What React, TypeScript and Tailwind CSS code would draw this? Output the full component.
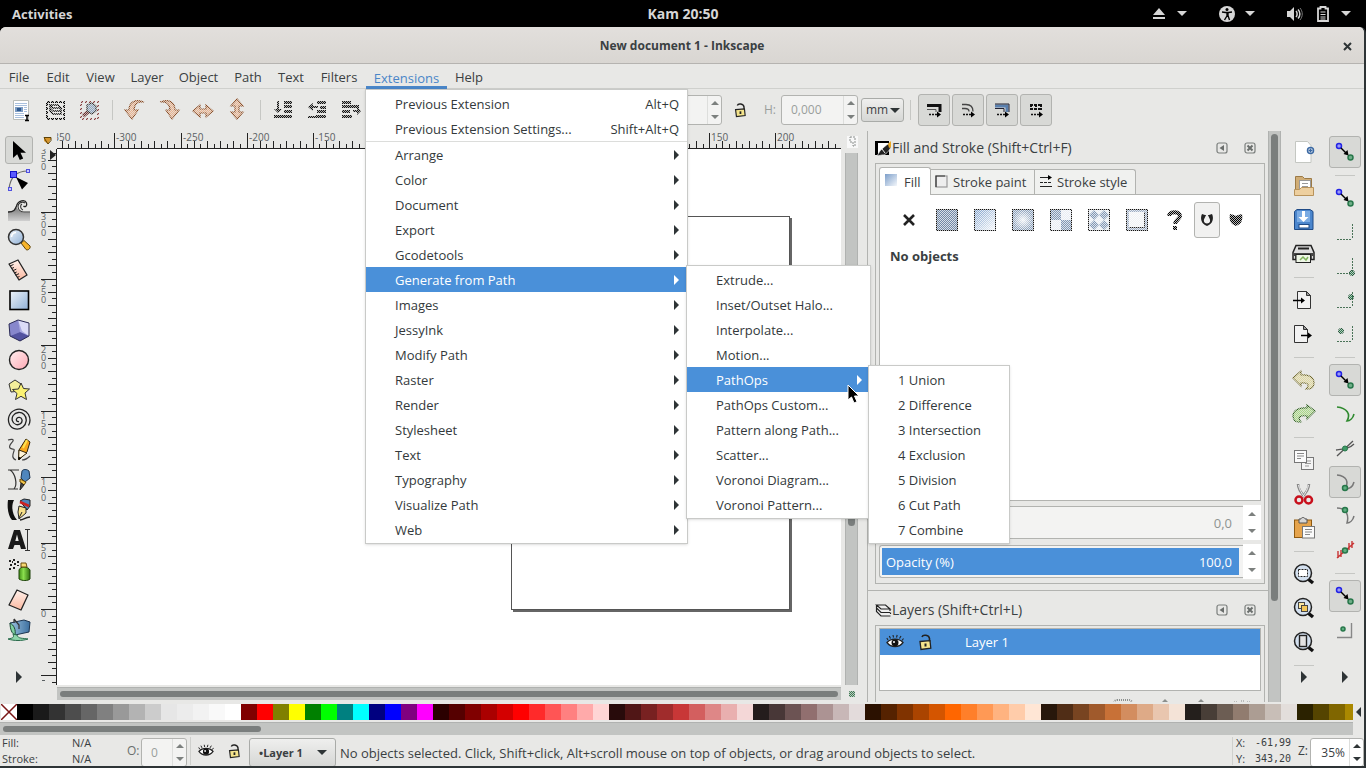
import React from "react";

type Kids = { children?: React.ReactNode };

const Svg = ({ s = 24, children }: Kids & { s?: number }) => (
  <svg width={s} height={s} viewBox={`0 0 ${s} ${s}`} fill="none" className="block shrink-0" aria-hidden="true">
    {children}
  </svg>
);

/* Shared gradients, plus the checkerboard mask used for insensitive icons */
const Defs = () => (
  <svg width="0" height="0" className="absolute" aria-hidden="true">
    <defs>
      <pattern id="checker" width="2" height="2" patternUnits="userSpaceOnUse">
        <rect width="2" height="2" fill="#444" />
        <rect width="1" height="1" fill="#fff" />
        <rect x="1" y="1" width="1" height="1" fill="#fff" />
      </pattern>
      <mask id="dither" maskUnits="userSpaceOnUse" x="0" y="0" width="32" height="32">
        <rect width="32" height="32" fill="url(#checker)" />
      </mask>
      <linearGradient id="gBlue" x1="0" y1="0" x2="1" y2="1">
        <stop offset="0" stopColor="#eef4fa" />
        <stop offset="1" stopColor="#8fb0d6" />
      </linearGradient>
      <linearGradient id="gFill" x1="0" y1="0" x2="1" y2="1">
        <stop offset="0" stopColor="#7d9fca" />
        <stop offset="1" stopColor="#f4f7fb" />
      </linearGradient>
      <linearGradient id="gPink" x1="0" y1="0" x2="1" y2="1">
        <stop offset="0" stopColor="#fff0f0" />
        <stop offset="1" stopColor="#ffa8b4" />
      </linearGradient>
      <linearGradient id="gSkin" x1="0" y1="0" x2="0" y2="1">
        <stop offset="0" stopColor="#fff2ec" />
        <stop offset="1" stopColor="#fbb8a0" />
      </linearGradient>
      <linearGradient id="gWave" x1="0" y1="0" x2="0" y2="1">
        <stop offset="0" stopColor="#777" />
        <stop offset="1" stopColor="#d0d0d0" />
      </linearGradient>
      <linearGradient id="gPot" x1="0" y1="0" x2="1" y2="0">
        <stop offset="0" stopColor="#9cc3e0" />
        <stop offset="1" stopColor="#3c6f9f" />
      </linearGradient>
      <linearGradient id="gGreen" x1="0" y1="0" x2="1" y2="0">
        <stop offset="0" stopColor="#3f8f14" />
        <stop offset="0.4" stopColor="#8be04e" />
        <stop offset="1" stopColor="#2f6d0f" />
      </linearGradient>
      <radialGradient id="gRadial">
        <stop offset="0" stopColor="#f2f5f9" />
        <stop offset="1" stopColor="#8ba0bb" />
      </radialGradient>
    </defs>
  </svg>
);

/* ---------- toolbox icons ---------- */
const SelectTool = () => (
  <Svg><path d="M6 3v17l4.200-3.800 2.600 5.800 3.400-1.600-2.700-5.600h5.500z" fill="#000" /></Svg>
);
const NodeTool = () => (
  <Svg>
    <path d="M2 21C3 11 8 3 21 3" stroke="#6a6a6a" strokeWidth="1.200" />
    <rect x="3.500" y="3.500" width="6" height="6" fill="#5a5aff" stroke="#1414c8" />
    <rect x="19.500" y="1.500" width="3" height="3" fill="#c8c8ff" stroke="#5050e0" />
    <rect x="1.500" y="19.500" width="3" height="3" fill="#c8c8ff" stroke="#5050e0" />
    <path d="M9 9l12 6-6 6.500z" fill="#000" />
  </Svg>
);
const TweakTool = () => (
  <Svg>
    <path d="M1 14c5 0 6-2 8-5 3 4 4 5 7 5.500h7V23H1z" fill="url(#gWave)" />
    <path d="M1 14c6 0 7-2 8.500-6C11 2.500 18 1 19.500 5c1 3-1.500 4.500-3 3" stroke="#222" strokeWidth="1.300" />
    <path d="M18 5c-3-2-7 0-7 3.500 0 3.500 3 5.500 6 5.500h6M15 6c-2 1-2 5 1 6" stroke="#333" strokeWidth="1.100" />
  </Svg>
);
const ZoomTool = () => (
  <Svg>
    <path d="M14 15l3-2.500 6 5.500c1 2-2 5-4 3.500z" fill="#f7b42a" stroke="#5e4206" />
    <circle cx="9" cy="9" r="7.500" fill="url(#gBlue)" stroke="#333" strokeWidth="1.500" />
    <path d="M4.500 9A5 5 0 0 1 9 4.500" stroke="#fff" strokeWidth="1.500" />
  </Svg>
);
const MeasureTool = () => (
  <Svg>
    <path d="M2 6l9-4 9 15-8 5z" fill="url(#gSkin)" stroke="#222" strokeWidth="1.300" strokeLinejoin="round" />
    <path d="M3 8l3.500-1.500M4.500 10.500l2.500-1M5.800 12.700l3.500-1.500M7.200 15l2.500-1M8.500 17.200l3.500-1.500M10 19.500l2.500-1" stroke="#222" />
  </Svg>
);
const RectTool = () => (
  <Svg><rect x="3" y="3" width="18.500" height="18.500" fill="url(#gBlue)" stroke="#000" strokeWidth="1.600" /></Svg>
);
const BoxTool = () => (
  <Svg>
    <path d="M2 6l9-4 11 3v13l-9 5-10-5z" fill="#a9a9e0" />
    <path d="M11 2l11 3v13l-7-5z" fill="#dcdcf7" />
    <path d="M2 6l9-4 2 12-10 4z" fill="#8787cc" />
    <path d="M3 18l10-4 9 4-9 5z" fill="#5353a0" />
    <path d="M2 6l9-4 11 3v13l-9 5-10-5z" stroke="#2c2c55" strokeLinejoin="round" />
  </Svg>
);
const CircleTool = () => (
  <Svg><circle cx="12" cy="12" r="9.500" fill="url(#gPink)" stroke="#222" strokeWidth="1.400" /></Svg>
);
const StarTool = () => (
  <Svg>
    <path d="M2 6l6-4 6 4-1 7-9 1z" fill="#f4ee9b" stroke="#333" strokeLinejoin="round" />
    <path d="M14 5l2.500 5.500 6 .5-4.500 4 1.500 6.500-5.500-3.200-5.500 3.200 1.500-6-4.500-4 6-.5z" fill="#fbf272" stroke="#333" strokeLinejoin="round" />
  </Svg>
);
const SpiralTool = () => (
  <Svg>
    <path d="M12 13.500c-2 .5-3-1-2.500-2.500 1-2.500 5-2 5.500.8.600 3.500-3 5.700-6 4.700-4-1.300-4.800-6-2.800-9C8.800 3.800 14 3.500 17 6.500c3.500 3.500 2.700 9.500-1 12.500-4.500 3.500-11 2.500-13.500-2.500C0 11 2 4.500 8 2c5-2 11 0 13.500 4.500 2 4 1.500 8.500 0 11" stroke="#222" strokeWidth="1.300" />
  </Svg>
);
const PencilTool = () => (
  <Svg>
    <path d="M1 2c3-1 6-1 5 1S1 8 3 10s5 0 4 3-3 7 2 9M15 22c4 0 6-2 8-4" stroke="#444" strokeWidth="1.200" />
    <path d="M12 12l7-11 4 3-3 10-8 8z" fill="#f9a61c" stroke="#33260a" />
    <path d="M12 12l-.5 9.500L20 15z" fill="#fff3d6" stroke="#33260a" />
    <path d="M16 10l4-8" stroke="#ffe34d" strokeWidth="2" />
    <path d="M11.300 22l.3-3.500 2.600 1.500z" fill="#000" />
  </Svg>
);
const PenTool = () => (
  <Svg>
    <path d="M1 2h11M3 2c5 3 8 14 4 19M1 21h10" stroke="#333" strokeWidth="1.200" />
    <path d="M15 3c1-2 5-2 7 0l1 7-5 4-4-4z" fill="#4f86bd" stroke="#1d3550" />
    <path d="M13 11l6 3-2 3-4-3z" fill="#f0c44a" stroke="#5e4206" />
    <path d="M14 15l-1 7 4-5z" fill="#444" stroke="#222" />
  </Svg>
);
const CalligraphyTool = () => (
  <Svg>
    <path d="M1 2h6C4 8 5 16 10 22H5C1 18 0 9 1 2z" fill="#111" />
    <path d="M13 3l4-2 6 1v6l-3 4z" fill="#4f86bd" stroke="#222" />
    <path d="M13 4l9 4" stroke="#c22" strokeWidth="2.500" />
    <path d="M12 8l7 2v5l-7 6-1-7z" fill="#f7e08a" stroke="#222" />
    <path d="M12 20l3-6" stroke="#222" />
    <path d="M13 22c4 0 5-3 10-3" stroke="#222" strokeWidth="1.500" />
  </Svg>
);
const TextTool = () => (
  <Svg>
    <path fillRule="evenodd" d="M7 2h6l6 19h-5l-1.200-4H7.500L6 21H1zM10 6.500l-1.700 6.500h3.400z" fill="#1a1a1a" />
    <path d="M18 1.500h5M20.500 1.500v21M18 22.500h5" stroke="#333" />
  </Svg>
);
const SprayTool = () => (
  <Svg>
    <path d="M12 12c1-4 9-4 11 0v9c-2 2-8 2-11 0z" fill="url(#gGreen)" stroke="#1e420a" />
    <path d="M14 9V5h5l1 4z" fill="#f6d873" stroke="#6b4d0c" />
    <path d="M2 2h2v2H2zM6 1h2v2H6zM3 6h2v2H3zM7 5h2v2H7zM2 10h2v2H2zM6 9h2v2H6zM10 3h2v2h-2zM10 7h2v1h-2zM5 3h1v2H5z" fill="#222" />
  </Svg>
);
const EraserTool = () => (
  <Svg><path d="M10 2l11 5-7 15L2 17z" fill="url(#gSkin)" stroke="#222" strokeWidth="1.300" strokeLinejoin="round" /></Svg>
);
const BucketTool = () => (
  <Svg>
    <path d="M3 5l14-3 6 2-1 10-14 3z" fill="url(#gPot)" stroke="#1d3550" strokeLinejoin="round" />
    <path d="M3 5c4 2 6 7 5 12-3-1-5-6-5-12z" fill="#7fd0a0" stroke="#1d4a35" />
    <path d="M6 16c1 3 1 4-5 5 6 2 14 2 20 0-5-1-10 0-11-4z" fill="#8fd6aa" stroke="#2a6b4c" />
    <path d="M7 5V1M7 1l5 6v4" stroke="#333" strokeWidth="1.200" />
  </Svg>
);

const TOOLS: [string, () => React.ReactElement][] = [
  ["Select", SelectTool], ["Edit nodes", NodeTool], ["Tweak", TweakTool], ["Zoom", ZoomTool],
  ["Measure", MeasureTool], ["Rectangle", RectTool], ["3D box", BoxTool], ["Ellipse", CircleTool],
  ["Star", StarTool], ["Spiral", SpiralTool], ["Pencil", PencilTool], ["Pen", PenTool],
  ["Calligraphy", CalligraphyTool], ["Text", TextTool], ["Spray", SprayTool], ["Eraser", EraserTool],
  ["Paint bucket", BucketTool],
];

/* ---------- top toolbar icons ---------- */
const PageIcon = () => (
  <Svg>
    <path d="M4.500 2.500h15v19h-15z" fill="#fff" stroke="#b9bdb9" />
    <path d="M6 5.500h12M6 7.500h12M6 15.500h9M6 17.500h9M6 19.500h9" stroke="#a9c1de" />
    <rect x="6" y="9" width="8" height="5" fill="#7d9cc2" /><rect x="8" y="10" width="4" height="3" fill="#2f5a8f" />
    <path d="M15 9.500h3M15 11.500h3M15 13.500h3" stroke="#a9c1de" />
    <path d="M16 17.500h4M18 17.500v5M16 22.500h4" stroke="#000" strokeWidth="1.500" />
  </Svg>
);
const SelectLayers = () => (
  <Svg><g mask="url(#dither)">
    <rect x="4" y="4" width="17" height="17" stroke="#000" strokeWidth="2" strokeDasharray="3 1" />
    <path d="M7 8l3-2h7l2 4v8h-8l-3-3z" fill="#eee" />
    <path d="M7 7h8l3 3h-8zM7 7v3l3 3h8M7 10v3l3 3h8v-6" stroke="#000" strokeWidth="1.400" />
  </g></Svg>
);
const Deselect = () => (
  <Svg><g mask="url(#dither)">
    <rect x="4" y="4" width="17" height="17" stroke="#8a4040" strokeWidth="2" strokeDasharray="2 2" />
    <path d="M6 18l6-5" stroke="#6b3030" strokeWidth="4" />
    <path d="M10 7l5-2 4 3v5l-4 3-5-3z" fill="#8fa6c0" stroke="#333" strokeWidth="1.300" />
  </g></Svg>
);
const RotL = () => (
  <Svg><g mask="url(#dither)"><path d="M21 4C15 3 11 6 11 12h4l-6 9-7-9h4C6 5 12 0 21 4z" fill="#e8b391" stroke="#8a4a22" strokeWidth="1.200" /></g></Svg>
);
const RotR = () => (
  <Svg><g mask="url(#dither)"><path d="M3 4C9 3 13 6 13 12H9l6 9 7-9h-4C18 5 12 0 3 4z" fill="#e8b391" stroke="#8a4a22" strokeWidth="1.200" /></g></Svg>
);
const FlipH = () => (
  <Svg><g mask="url(#dither)"><path d="M2 13l7-6v4h6V7l7 6-7 6v-4H9v4z" fill="#e8b391" stroke="#8a4a22" strokeWidth="1.200" /></g></Svg>
);
const FlipV = () => (
  <Svg><g mask="url(#dither)"><path d="M12 1l6 7h-4v6h4l-6 7-6-7h4V8H6z" fill="#e8b391" stroke="#8a4a22" strokeWidth="1.200" /></g></Svg>
);
const LowerBottom = () => (
  <Svg><g mask="url(#dither)" fill="#111">
    <path d="M3 17h18v3H3zM13 3h8v3h-8zM13 7h8v3h-8zM13 12h8v3h-8z" /><path d="M6 3h2v8h3l-4 4-4-4h3z" />
  </g></Svg>
);
const LowerOne = () => (
  <Svg><g mask="url(#dither)" fill="#111">
    <path d="M11 17h10v3H3v-2h8zM12 3h9v3h-9zM15 8h6v3h-6zM12 12h9v3h-9z" /><path d="M3 9l5-4v3h5v2H8v3z" />
  </g></Svg>
);
const RaiseOne = () => (
  <Svg><g mask="url(#dither)" fill="#111">
    <path d="M3 3h9v3H3zM3 7h17v3H3zM3 12h8v3H3zM3 17h10v3H3z" /><path d="M22 13l-4-4v3h-4v2h4v3z" />
  </g></Svg>
);
const OpenLock = ({ s = 18 }: { s?: number }) => (
  <svg width={s} height={s} viewBox="0 0 18 18" fill="none" className="block shrink-0" aria-hidden="true">
    <path d="M6 4c1-3 7-2 7.500 1.500V9" stroke="#222" strokeWidth="1.600" />
    <path d="M4 8.500l10-.8.8 7.500L5 16.500z" fill="#f4e48c" stroke="#222" strokeWidth="1.300" />
    <path d="M9.500 10.500v3" stroke="#222" strokeWidth="2" />
  </svg>
);
const EyeIcon = ({ s = 18 }: { s?: number }) => (
  <svg width={s} height={s} viewBox="0 0 18 18" fill="none" className="block shrink-0" aria-hidden="true">
    <path d="M1 9.500C5 5 13 5 17 9.500 13 15 5 15 1 9.500z" fill="#fff" stroke="#222" strokeWidth="1.300" />
    <circle cx="9" cy="9.800" r="3.500" fill="#111" /><circle cx="8" cy="9" r="1" fill="#fff" />
    <path d="M2 7L.8 5M4.500 5.500L3.300 3M7.500 4.500L7 2M10.500 4.500l.7-2.500M13.500 5.500L15 3M16 7.500l1.500-2" stroke="#222" strokeWidth="1.100" />
  </svg>
);
const ScaleStroke = ({ kind }: { kind: number }) => (
  <Svg>
    {kind === 0 && <><path d="M5 7.500h13V14" stroke="#111" strokeWidth="3" /><path d="M5 11.500h9V14" stroke="#555" /></>}
    {kind === 1 && <path d="M6 6.500h4c5 0 7 2 7 7M6 10.500h3c3 0 4 1 4 3" stroke="#444" strokeWidth="1.300" />}
    {kind === 2 && <><path d="M5 8h12v6" stroke="#5a80ae" strokeWidth="3" /><path d="M5 6h14v8M5 10.500h9V14" stroke="#223" /></>}
    {kind === 3 && <path d="M6 7h12M6 11h12M7 6v6M12 6v6M17 6v6" stroke="#111" strokeWidth="2" strokeDasharray="3 1" />}
    <path d="M7 16.500h8" stroke="#111" strokeDasharray="2 1" strokeWidth="1.500" />
    <path d="M15 13.500l4 3-4 3z" fill="#000" />
  </Svg>
);

/* ---------- command bar icons ---------- */
const sheet = "M5.500 3.500h9l4 4v13h-13z";
const NewDoc = () => (
  <Svg>
    <path d="M3.500 1.500h12l3.500 4v17H3.500z" fill="#fff" stroke="#c4c7c2" />
    <circle cx="18.500" cy="10.500" r="3" fill="#fff" stroke="#3b69a3" strokeWidth="1.500" />
    <path d="M16.500 10.500h4M18.500 8.500v4" stroke="#3b69a3" strokeWidth="1.500" />
  </Svg>
);
const OpenDoc = () => (
  <Svg>
    <path d="M3.500 2.500h7l2 2h7v14h-16z" fill="#d0ad76" stroke="#9c7a46" />
    <rect x="7.500" y="6.500" width="11" height="9" fill="#fff" stroke="#999" />
    <path d="M10 9.500h6M10 12.500h6" stroke="#999" />
    <path d="M2.500 15.500h5l2-2h12v8h-19z" fill="#edcf9f" stroke="#b8935b" />
  </Svg>
);
const SaveDoc = () => (
  <Svg>
    <path d="M5 1.500h13l3 2v18H2.500v-18z" fill="#4b86cd" stroke="#1e4a86" />
    <rect x="5" y="3" width="13" height="11" fill="#7aabe3" />
    <path d="M10 3h3v6h3.500L11.500 14 6.500 9H10z" fill="#fff" />
    <rect x="7" y="16.500" width="10" height="3.500" fill="#fff" stroke="#1e4a86" />
  </Svg>
);
const PrintDoc = () => (
  <Svg>
    <path d="M4 3.500h15l3 7v7h-3v-4h-15v4h-3v-7z" fill="#ddd" stroke="#222" strokeWidth="1.500" />
    <path d="M6 6.500h11" stroke="#222" strokeWidth="2" />
    <path d="M1.500 11h20v3h-20z" fill="#444" />
    <rect x="4" y="12.500" width="14.500" height="8" fill="#eef6e6" stroke="#222" />
    <path d="M8 18l3-3 3 3 2-3" stroke="#7fb35c" strokeWidth="1.500" />
  </Svg>
);
const ImportDoc = () => (
  <Svg><path d={sheet} fill="#f2f2f2" stroke="#333" /><path d="M14.500 3.500v4h4z" fill="#999" stroke="#333" />
    <path d="M1 12.500h9" stroke="#000" strokeWidth="1.500" /><path d="M9 9.500l4 3-4 3z" fill="#000" /></Svg>
);
const ExportDoc = () => (
  <Svg><path d="M2.500 3.500h9l4 4v13h-13z" fill="#f2f2f2" stroke="#333" /><path d="M11.500 3.500v4h4z" fill="#999" stroke="#333" />
    <path d="M9 13.500h8" stroke="#000" strokeWidth="1.500" /><path d="M16 10.500l4 3-4 3z" fill="#000" /></Svg>
);
const UndoIcon = () => (
  <Svg><g mask="url(#dither)"><path d="M1 10l8-7v4c9-1 13 3 13 8 0 3-2 6-5 6h-3c4-4 2-7-5-6v3z" fill="#e0d8a0" stroke="#6f6726" strokeWidth="1.200" /></g></Svg>
);
const RedoIcon = () => (
  <Svg><g mask="url(#dither)"><path d="M23 9l-8-6v3C6 5 1 9 1 14c0 3 2 6 5 6h3c-4-5-1-7 6-6v3z" fill="#aad888" stroke="#2d5f1e" strokeWidth="1.200" /></g></Svg>
);
const CopyIcon = () => (
  <Svg>
    <rect x="9.500" y="9.500" width="12" height="12" fill="#f4f4f4" stroke="#777" />
    <path d="M13 13h6M13 15.500h6M13 18h4" stroke="#999" />
    <rect x="2.500" y="2.500" width="12" height="12" fill="#fbfbfb" stroke="#777" />
    <path d="M5 5.500h7M5 8h7M5 10.500h4" stroke="#888" />
  </Svg>
);
const CutIcon = () => (
  <Svg>
    <path d="M6 2c0 5 3 9 7 13M17 2c0 5-3 9-7 13" stroke="#888" strokeWidth="2.500" />
    <path d="M6.500 3c1 5 3 8 6 12M16.500 3c-1 5-3 8-6 12" stroke="#eee" />
    <circle cx="7" cy="18" r="3.500" stroke="#c8101c" strokeWidth="2.500" />
    <circle cx="16.500" cy="18" r="3.500" stroke="#c8101c" strokeWidth="2.500" />
  </Svg>
);
const PasteIcon = () => (
  <Svg>
    <rect x="2.500" y="4" width="17" height="17.500" fill="#e6a44c" stroke="#8f5a10" />
    <path d="M7 3h2c0-2 4-2 4 0h2v4H7z" fill="#d6d6d6" stroke="#555" />
    <rect x="10.500" y="10.500" width="12" height="11.500" fill="#fbfbfb" stroke="#777" />
    <path d="M13 13.500h7M13 16h7M13 18.500h5" stroke="#888" />
  </Svg>
);
const Lens = ({ children }: Kids) => (
  <Svg>
    <path d="M16 17l5 4" stroke="#111" strokeWidth="3.500" />
    <circle cx="11" cy="11" r="8.500" fill="#d3e0ef" stroke="#222" strokeWidth="1.500" />
    {children}
  </Svg>
);
const ZoomSel = () => (
  <Lens><rect x="6.500" y="7.500" width="9" height="7" fill="#fff" stroke="#222" strokeDasharray="2 1" /></Lens>
);
const ZoomDraw = () => (
  <Lens><rect x="6.500" y="6.500" width="6" height="6" fill="#fbe7a0" stroke="#444" /><rect x="9.500" y="9.500" width="6" height="6" fill="#f3c75a" stroke="#444" /></Lens>
);
const ZoomPage = () => (
  <Lens><rect x="7.500" y="5.500" width="7" height="11" fill="#e3e3e3" stroke="#222" strokeWidth="1.400" /></Lens>
);

/* ---------- snap bar icons ---------- */
const SnapNodes = () => (
  <Svg>
    <circle cx="6" cy="6" r="2.500" fill="#9a9af5" stroke="#2323e6" strokeWidth="1.500" />
    <circle cx="17.500" cy="17.500" r="2.500" fill="#6fae88" stroke="#27774a" strokeWidth="1.500" />
    <path d="M8 8l5.500 5.500" stroke="#000" strokeWidth="1.400" /><path d="M15.500 15.500l-5-1.500 4-4z" fill="#000" />
  </Svg>
);
const SnapBox = ({ x, y }: { x?: number; y?: number }) => (
  <Svg>
    <path d="M4 19.500h15M19.500 4v15" stroke="#4a7358" strokeDasharray="2 1" />
    {x !== undefined && <g mask="url(#dither)"><circle cx={x} cy={y} r="2.500" fill="#2f7a50" stroke="#174a2e" /></g>}
  </Svg>
);
const SnapPath = () => (
  <Svg><path d="M4 5c10 1 14 7 10 14 3 0 6-3 7-7" stroke="#2f8a2f" strokeWidth="1.600" /></Svg>
);
const SnapCross = () => (
  <Svg><path d="M4 20L20 5M3 14c8-1 13-1 18-6" stroke="#555" strokeWidth="1.300" /><circle cx="12" cy="12.500" r="2.500" fill="#3f9a66" stroke="#27774a" /></Svg>
);
const SnapCusp = () => (
  <Svg><path d="M4 5c10 1 12 7 8 14 5 0 8-3 9-7" stroke="#777" strokeWidth="1.500" /><circle cx="12" cy="18" r="2.500" fill="#5fae80" stroke="#27774a" strokeWidth="1.500" /></Svg>
);
const SnapSmooth = () => (
  <Svg><path d="M4 4c10 0 12 8 10 15 3 0 6-3 7-7" stroke="#777" strokeWidth="1.500" /><circle cx="12" cy="6" r="2.500" fill="#5fae80" stroke="#27774a" strokeWidth="1.500" /></Svg>
);
const SnapMid = () => (
  <Svg><path d="M4 20L21 5M5 13v7M8 12v7M16 5v7M19 3v7" stroke="#c83434" strokeWidth="1.400" /><circle cx="12" cy="12.500" r="2.500" fill="#5fae80" stroke="#27774a" strokeWidth="1.500" /></Svg>
);
const SnapCorner = () => (
  <Svg><path d="M4 19.500h14.500V5" stroke="#888" strokeWidth="1.400" /><circle cx="10" cy="11" r="2" fill="#5fae80" stroke="#27774a" strokeWidth="1.500" /></Svg>
);

/* ---------- small parts ---------- */
const Tri = ({ dir = "right", w = 6, className = "" }: { dir?: "right" | "left" | "up" | "down"; w?: number; className?: string }) => {
  const h = w * 2;
  const d = {
    right: [w, h, `M0 0L${w} ${w}L0 ${h}z`],
    left: [w, h, `M${w} 0L0 ${w}L${w} ${h}z`],
    up: [h, w, `M0 ${w}L${w} 0L${h} ${w}z`],
    down: [h, w, `M0 0L${w} ${w}L${h} 0z`],
  }[dir] as [number, number, string];
  return (
    <svg width={d[0]} height={d[1]} viewBox={`0 0 ${d[0]} ${d[1]}`} className={`block shrink-0 ${className}`} aria-hidden="true">
      <path d={d[2]} fill="currentColor" />
    </svg>
  );
};

const Steps = ({ className }: { className: string }) => (
  <span className={`flex shrink-0 flex-col ${className}`}>
    <button aria-label="Increase" className="flex flex-1 items-center justify-center"><Tri dir="up" w={4} /></button>
    <button aria-label="Decrease" className="flex flex-1 items-center justify-center"><Tri dir="down" w={4} /></button>
  </span>
);

const HSep = () => (
  <div className="flex h-3 w-full items-center justify-center"><div className="h-px w-5 bg-[#c6c7c4]" /></div>
);
const VSep = () => (
  <div className="flex h-full w-3 items-center justify-center"><div className="h-5 w-px bg-[#c6c7c4]" /></div>
);

const ToolButton = ({ label, on, children }: Kids & { label: string; on?: boolean }) => (
  <button
    aria-label={label}
    aria-pressed={on}
    className={`my-px flex size-8 shrink-0 items-center justify-center rounded-[3px] border ${on ? "border-[#b2b3b0] bg-[#d8d9d6]" : "border-transparent"}`}
  >
    {children}
  </button>
);

/* ---------- menus ---------- */
const popup = "absolute z-20 border border-[#c9cac8] bg-white py-px shadow-sm";
const MenuRow = ({ label, keys, sub, on, children }: Kids & { label: string; keys?: string; sub?: boolean; on?: boolean }) => (
  <li className="relative" role="none">
    <button
      role="menuitem"
      className={`flex h-[25px] w-full items-center pr-2 pl-[29px] text-left whitespace-nowrap ${on ? "bg-[#4a90d9] text-white" : "text-[#33393b]"}`}
    >
      <span className="flex-1">{label}</span>
      {keys && <span>{keys}</span>}
      {sub && <Tri w={5} className={on ? "text-white" : "text-[#2e3436]"} />}
    </button>
    {children}
  </li>
);

const OPS = ["1 Union", "2 Difference", "3 Intersection", "4 Exclusion", "5 Division", "6 Cut Path", "7 Combine"];
const GENERATE = ["Extrude...", "Inset/Outset Halo...", "Interpolate...", "Motion...", "PathOps", "PathOps Custom...", "Pattern along Path...", "Scatter...", "Voronoi Diagram...", "Voronoi Pattern..."];
const EXTENSIONS = ["Arrange", "Color", "Document", "Export", "Gcodetools", "Generate from Path", "Images", "JessyInk", "Modify Path", "Raster", "Render", "Stylesheet", "Text", "Typography", "Visualize Path", "Web"];

const Pointer = () => (
  <svg width="14" height="20" viewBox="0 0 14 20" className="pointer-events-none absolute top-[17px] left-40 z-40" aria-hidden="true">
    <path d="M1 1v15l3.500-3 2.500 6 3-1.300-2.500-5.700H12z" fill="#000" stroke="#fff" />
  </svg>
);

const ExtensionsMenu = () => (
  <ul role="menu" className={`${popup} top-full left-0 -ml-px w-[323px]`}>
    <MenuRow label="Previous Extension" keys="Alt+Q" />
    <MenuRow label="Previous Extension Settings..." keys="Shift+Alt+Q" />
    <li role="separator" className="h-px bg-[#dcdddb]" />
    {EXTENSIONS.map((e) => (
      <MenuRow key={e} label={e} sub on={e === "Generate from Path"}>
        {e === "Generate from Path" && (
          <ul role="menu" className={`${popup} -top-0.5 left-full -ml-px w-[185px]`}>
            {GENERATE.map((g) => (
              <MenuRow key={g} label={g} sub={g === "PathOps"} on={g === "PathOps"}>
                {g === "PathOps" && (
                  <>
                    <ul role="menu" className={`${popup} -top-0.5 left-full -ml-0.5 w-[142px]`}>
                      {OPS.map((o) => <MenuRow key={o} label={o} />)}
                    </ul>
                    <Pointer />
                  </>
                )}
              </MenuRow>
            ))}
          </ul>
        )}
      </MenuRow>
    ))}
  </ul>
);

const MENUS: [string, string][] = [
  ["File", "w-[38px]"], ["Edit", "w-10"], ["View", "w-[45px]"], ["Layer", "w-12"], ["Object", "w-[55px]"],
  ["Path", "w-11"], ["Text", "w-[42px]"], ["Filters", "w-[54px]"], ["Extensions", "w-[81px]"], ["Help", "w-11"],
];

/* ---------- rulers ---------- */
const UNIT = 1.3217;
const H_LABELS = [-350, -300, -250, -200, -150, 150, 200];
const HRuler = () => {
  const marks = Array.from({ length: 320 }, (_, i) => (i - 72) * 5);
  return (
    <svg className="block h-[18px] w-full overflow-hidden text-[10px]" aria-hidden="true">
      {marks.map((m) => {
        const x = Math.round(454 + m * UNIT);
        const h = m % 50 === 0 ? 15 : m % 10 === 0 ? 7 : 4;
        return (
          <g key={m}>
            <rect x={x} y={17 - h} width="1" height={h} fill="#222" />
            {H_LABELS.includes(m) && <text x={x + 2} y="10" fill="#5a6063">{m}</text>}
          </g>
        );
      })}
      <rect y="17" width="100%" height="1" fill="#222" />
    </svg>
  );
};
const V_LABELS = [350, 300, 250, 200, 150, 100, 50, 0];
const VRuler = () => {
  const marks = Array.from({ length: 240 }, (_, i) => 355 - i * 5);
  return (
    <svg className="block h-full w-[18px] overflow-hidden text-[9px]" aria-hidden="true">
      {marks.map((m) => {
        const y = Math.round(460 - m * UNIT);
        const w = m % 50 === 0 ? 15 : m % 10 === 0 ? 8 : 4;
        return (
          <g key={m}>
            <rect x={17 - w} y={y} width={w} height="1" fill="#222" />
            {m === -50 && <rect x="3" y={y + 5} width="3" height="1" fill="#5a6063" />}
            {V_LABELS.includes(m) && String(m).split("").map((c, i) => (
              <text key={i} x="2" y={y + 8 + i * 8} fill="#5a6063">{c}</text>
            ))}
          </g>
        );
      })}
      <path d="M11 1l6 5-6 5z" fill="#222" />
      <rect x="17" width="1" height="100%" fill="#222" />
    </svg>
  );
};

/* ---------- palette ---------- */
const SWATCHES = [
  "bg-[#000000]", "bg-[#1a1a1a]", "bg-[#333333]", "bg-[#4d4d4d]", "bg-[#666666]", "bg-[#808080]", "bg-[#999999]", "bg-[#b3b3b3]", "bg-[#cccccc]", "bg-[#e6e6e6]", "bg-[#ececec]", "bg-[#f2f2f2]", "bg-[#f9f9f9]", "bg-[#ffffff]",
  "bg-[#800000]", "bg-[#ff0000]", "bg-[#808000]", "bg-[#ffff00]", "bg-[#008000]", "bg-[#00ff00]", "bg-[#008080]", "bg-[#00ffff]", "bg-[#000080]", "bg-[#0000ff]", "bg-[#800080]", "bg-[#ff00ff]",
  "bg-[#2b0000]", "bg-[#550000]", "bg-[#800000]", "bg-[#aa0000]", "bg-[#d40000]", "bg-[#ff0000]", "bg-[#ff2a2a]", "bg-[#ff5555]", "bg-[#ff8080]", "bg-[#ffaaaa]", "bg-[#ffd5d5]",
  "bg-[#280b0b]", "bg-[#501616]", "bg-[#782121]", "bg-[#a02c2c]", "bg-[#c83737]", "bg-[#d35f5f]", "bg-[#de8787]", "bg-[#e9afaf]", "bg-[#f4d7d7]",
  "bg-[#241c1c]", "bg-[#483737]", "bg-[#6c5353]", "bg-[#916f6f]", "bg-[#ac9393]", "bg-[#c8b7b7]", "bg-[#e3dbdb]",
  "bg-[#2b1100]", "bg-[#552200]", "bg-[#803300]", "bg-[#aa4400]", "bg-[#d45500]", "bg-[#ff6600]", "bg-[#ff7f2a]", "bg-[#ff9955]", "bg-[#ffb380]", "bg-[#ffccaa]", "bg-[#ffe6d5]",
  "bg-[#28170b]", "bg-[#502d16]", "bg-[#784421]", "bg-[#a05a2c]", "bg-[#c87137]", "bg-[#d38d5f]", "bg-[#deaa87]", "bg-[#e9c6af]", "bg-[#f4e3d7]",
  "bg-[#241f1c]", "bg-[#483e37]", "bg-[#6c5d53]", "bg-[#917c6f]", "bg-[#ac9d93]", "bg-[#c8beb7]", "bg-[#e3dedb]",
  "bg-[#2b2200]", "bg-[#554400]", "bg-[#806600]", "bg-[#aa8800]",
];

/* ---------- dock ---------- */
const DockButton = ({ close }: { close?: boolean }) => (
  <button aria-label={close ? "Close dialog" : "Iconify dialog"}>
    <svg width="12" height="12" viewBox="0 0 12 12" fill="none" className="block">
      <rect x="1" y="1" width="10" height="10" rx="2" stroke="#7a7e7c" strokeWidth="1.200" />
      {close ? <path d="M3.500 3.500l5 5M8.500 3.500l-5 5" stroke="#6a6e6c" strokeWidth="2" /> : <path d="M8 3v6L3.500 6z" fill="#6a6e6c" />}
    </svg>
  </button>
);
const DockTitle = ({ icon, children }: Kids & { icon: React.ReactNode }) => (
  <div className="flex h-[30px] shrink-0 items-center pr-3 pl-[7px]">
    {icon}
    <h2 className="flex-1 text-[14px]">{children}</h2>
    <div className="flex gap-4"><DockButton /><DockButton close /></div>
  </div>
);
const BrushIcon = () => (
  <Svg s={17}>
    <rect x="0" y="1" width="14" height="14" fill="#000" /><path d="M3 3h11L3 14z" fill="#fff" />
    <path d="M2 16c2-3 3-6 5-7 3-3 6-5 8-6l1 4c-2 4-5 8-9 8z" fill="#222" stroke="#eee" strokeWidth=".7" />
    <path d="M7 9l3 4" stroke="#eee" /><path d="M13 4l3-3v6l-2 1z" fill="#e8a723" />
  </Svg>
);
const LayersIcon = () => (
  <Svg s={17}>
    <path d="M1 3h10l5 4v8H6l-5-4z" fill="#eee" />
    <path d="M1.500 3h9l4.500 4H6zM1.500 3v3l4.500 4.500h9M1.500 6.500v3L6 14h9.500M15 7v2M15.500 10.500V12" stroke="#222" strokeWidth="1.200" />
  </Svg>
);
const PaintSwatch = ({ kind }: { kind: string }) => (
  <Svg s={22}>
    <g mask="url(#dither)">
      <rect width="22" height="22" fill="#111" />
      {kind === "flat" && <rect x="1" y="1" width="20" height="20" fill="#7288a6" />}
      {kind === "linear" && <rect x="1" y="1" width="20" height="20" fill="url(#gFill)" />}
      {kind === "radial" && <rect x="1" y="1" width="20" height="20" fill="url(#gRadial)" />}
      {kind === "pattern" && <><rect x="1" y="1" width="20" height="20" fill="#e8edf4" /><path d="M1 1h10v10H1zM11 11h10v10H11z" fill="#8197b5" /></>}
      {kind === "mesh" && <><rect x="1" y="1" width="20" height="20" fill="#e8edf4" /><path d="M6 1l5 5-5 5-5-5zM16 1l5 5-5 5-5-5zM6 11l5 5-5 5-5-5zM16 11l5 5-5 5-5-5z" fill="#8197b5" /></>}
      {kind === "swatch" && <><rect x="1" y="1" width="20" height="20" fill="#a0b0c6" /><rect x="3" y="3" width="15" height="15" fill="#f0f2f5" /><path d="M3 18.500h15.500V3" stroke="#222" /></>}
    </g>
  </Svg>
);

const FillAndStroke = () => (
  <section className="shrink-0 border-b border-[#b2b3b0] pb-1.5">
    <div className="pt-0.5"><DockTitle icon={<BrushIcon />}>Fill and Stroke (Shift+Ctrl+F)</DockTitle></div>
    <div className="mr-[3px] ml-[7px] border border-[#b2b3b0] px-[3px] pt-[3px] pb-1">
      <div role="tablist" className="flex items-end">
        <button role="tab" aria-selected="true" className="z-10 -mb-px flex h-7 w-[52px] items-center gap-1 rounded-t-[3px] border border-b-0 border-[#b2b3b0] bg-white pl-1">
          <Svg s={16}><rect x="1" y="0" width="12" height="12" fill="url(#gFill)" /></Svg>Fill
        </button>
        <button role="tab" aria-selected="false" className="flex h-[25px] w-[104px] items-center gap-1 border-t border-r border-[#b2b3b0] bg-[#f0f1ef] pl-1 whitespace-nowrap">
          <Svg s={14}><rect x="1" y="1" width="11" height="11" fill="#eee" stroke="#999" strokeWidth="1.200" /><path d="M1 12V1h9" stroke="#333" strokeWidth="1.200" /></Svg>Stroke paint
        </button>
        <button role="tab" aria-selected="false" className="flex h-[25px] w-[101px] items-center gap-1 rounded-tr-[3px] border-t border-r border-[#b2b3b0] bg-[#f0f1ef] pl-1 whitespace-nowrap">
          <Svg s={14}><path d="M1 7.500h12" stroke="#222" strokeDasharray="3 1" /><path d="M1 11.500h12M1 2.500h9" stroke="#222" /><path d="M9 0l4 2.500L9 5z" fill="#000" /></Svg>Stroke style
        </button>
      </div>
      <div role="tabpanel" className="h-[307px] border border-[#b2b3b0] bg-white">
        <div className="flex pt-[7px] pl-[10px]">
          <button aria-label="No paint" className="flex h-9 w-[38px] items-center justify-center">
            <Svg s={14}><path d="M2 2l10 10M12 2L2 12" stroke="#222" strokeWidth="2.600" /></Svg>
          </button>
          {["flat", "linear", "radial", "pattern", "mesh", "swatch"].map((k) => (
            <button key={k} aria-label={k} className="flex h-9 w-[38px] items-center justify-center"><PaintSwatch kind={k} /></button>
          ))}
          <button aria-label="Unknown paint" className="flex h-9 w-[38px] items-center justify-center">
            <Svg s={20}><g mask="url(#dither)"><path d="M4 6c0-5 11-5 11 0 0 3-5 4-5 8" stroke="#000" strokeWidth="4" /><rect x="8" y="16" width="4" height="4" fill="#000" /></g></Svg>
          </button>
          <button aria-label="Even-odd fill" className="flex h-9 w-[26px] items-center justify-center rounded-[3px] border border-[#b2b3b0] bg-[#f1f1f0]">
            <Svg s={14}><path d="M2 1l3 1h4l3-1c2 4 1 10-5 12C1 11 0 5 2 1z" fill="#222" /><path d="M7 0C5 5 3.500 6 4 8.500c.5 2.500 5.500 2.500 6 0C10.500 6 9 5 7 0z" fill="#f1f1f0" /></Svg>
          </button>
          <button aria-label="Nonzero fill" className="flex h-9 w-8 items-center justify-center">
            <Svg s={14}><g mask="url(#dither)"><path d="M1 1l4 1 2 1 2-1 4-1c1 5 0 10-6 12C1 11 0 6 1 1z" fill="#000" /></g></Svg>
          </button>
        </div>
        <p className="px-[10px] pt-[10px] font-bold">No objects</p>
      </div>
      <div className="mt-1 flex h-[35px] items-center">
        <input aria-label="Blur (%)" readOnly disabled value="0,0" className="h-[33px] min-w-0 flex-1 rounded-l-[3px] border border-r-0 border-[#b2b3b0] bg-[#f3f3f2] pr-[11px] text-right text-[#8f9391]" />
        <Steps className="h-full w-[18px] bg-white text-[#7c807e]" />
      </div>
      <div className="mt-1 flex h-[35px] items-center">
        <div className="h-[33px] min-w-0 flex-1 rounded-l-[3px] border border-r-0 border-[#b2b3b0] bg-[#f3f3f2] py-0.5 pr-1 pl-0.5">
          <div className="flex h-full items-center bg-[#4a90d9] text-white">
            <label htmlFor="opacity" className="pl-1">Opacity (%)</label>
            <input id="opacity" readOnly value="100,0" className="min-w-0 flex-1 bg-transparent pr-[7px] text-right outline-none" />
          </div>
        </div>
        <Steps className="h-full w-[18px] bg-white text-[#7c807e]" />
      </div>
    </div>
  </section>
);

const Layers = () => (
  <section className="pt-1">
    <DockTitle icon={<LayersIcon />}>Layers (Shift+Ctrl+L)</DockTitle>
    <div className="mr-[3px] ml-[7px] border border-[#b2b3b0] px-[3px] pt-0.5 pb-1">
      <div className="h-[63px] border border-[#b2b3b0] bg-white">
        <div className="flex h-[26px] items-center bg-[#4a90d9] pl-1.5 text-white">
          <button aria-label="Toggle visibility"><EyeIcon /></button>
          <button aria-label="Toggle lock" className="ml-3"><OpenLock /></button>
          <span className="ml-[31px]">Layer 1</span>
        </div>
      </div>
      <div className="mt-2 mr-[10px] flex justify-end gap-7 text-[#8b8f8d]">
        <svg width="20" height="8" className="block" aria-hidden="true"><rect x="1" y="1" width="18" height="8" rx="3" stroke="currentColor" strokeWidth="2" strokeDasharray="1 1" fill="none" /></svg>
        <Tri dir="up" w={4} /><Tri dir="up" w={4} />
        <svg width="18" height="8" className="block" aria-hidden="true"><path d="M1 3h4M8 2h3M14 3h3" stroke="currentColor" strokeDasharray="1 1" /></svg>
      </div>
    </div>
  </section>
);

const Track = "bg-[#c2c4c2] border-[#b0b2b0]";
const field = "rounded-[3px] border border-[#b2b3b0] bg-[#f3f3f2]";

export default function App() {
  return (
    <div className="flex h-screen flex-col overflow-hidden bg-black font-['Open_Sans','Noto_Sans',sans-serif] text-[13px] leading-4 text-[#3a4042]">
      <Defs />
      <header className="grid h-[27px] shrink-0 grid-cols-3 items-center px-3 text-[14px] font-bold text-[#d6d6d6]">
        <button className="justify-self-start text-[13px]">Activities</button>
        <time className="justify-self-center">Kam 20:50</time>
        <div className="flex items-center justify-self-end pr-[3px]">
          <svg width="12" height="12" viewBox="0 0 12 12" fill="#d6d6d6" aria-hidden="true"><path d="M6 0l6 7H0zM0 9h12v2H0z" /></svg>
          <Tri dir="down" w={5} className="ml-3" />
          <svg width="16" height="16" viewBox="0 0 16 16" className="ml-8" aria-hidden="true">
            <circle cx="8" cy="8" r="8" fill="#d6d6d6" /><circle cx="8" cy="3.500" r="1.500" fill="#000" />
            <path d="M3 6l3.500.5h3L13 6M7 6.500h2v3L10.500 14M8.500 9L5.500 14M8 6v4" stroke="#000" strokeWidth="1.400" fill="none" />
          </svg>
          <Tri dir="down" w={5} className="ml-[10px]" />
          <svg width="16" height="14" viewBox="0 0 16 14" fill="none" className="ml-8" aria-hidden="true">
            <path d="M0 4h3l4-4v14l-4-4H0z" fill="#d6d6d6" /><path d="M9 4c1.500 1.500 1.500 4.500 0 6M11 2.500c2.500 2.500 2.500 6.500 0 9" stroke="#d6d6d6" strokeWidth="1.500" />
            <path d="M13 1c3 3.500 3 8.500 0 12" stroke="#777" />
          </svg>
          <svg width="12" height="16" viewBox="0 0 12 16" fill="none" className="ml-[14px]" aria-hidden="true">
            <path d="M1 2.500h2.500V1h5v1.500H11V15H1z" stroke="#d6d6d6" strokeWidth="1.800" /><path d="M3.500 6h5M3.500 8.500h5M3.500 11h5M3.500 13h5" stroke="#d6d6d6" />
          </svg>
          <Tri dir="down" w={5} className="ml-3" />
        </div>
      </header>

      <div className="flex min-h-0 flex-1 flex-col rounded-t-md border-r-2 border-b-2 border-[#2e3436] bg-[#e8e8e6]">
        <div className="relative flex h-[37px] shrink-0 items-center justify-center rounded-t-md border-b border-[#b5b3b0] bg-gradient-to-b from-[#e2dfdc] to-[#d9d6d2] pt-0.5">
          <h1 className="text-[12px] font-bold">New document 1 - Inkscape</h1>
          <button aria-label="Close" className="absolute right-3">
            <Svg s={9}><path d="M1 1l7 7M8 1L1 8" stroke="#2e3436" strokeWidth="2" /></Svg>
          </button>
        </div>

        <nav className="flex h-[25px] shrink-0 border-b border-[#cfd0cd]">
          {MENUS.map(([m, w]) => (
            <div key={m} className={`relative h-[25px] shrink-0 ${w}`}>
              <button className={`flex h-[25px] w-full items-center justify-center ${m === "Extensions" ? "border-b-[3px] border-[#4a86c8] pt-1.5 text-[#4a86c8]" : "pt-px"}`}>{m}</button>
              {m === "Extensions" && <ExtensionsMenu />}
            </div>
          ))}
        </nav>

        <div className="flex h-[42px] shrink-0 items-center pl-1">
          {[PageIcon, SelectLayers, Deselect].map((I, i) => (
            <button key={i} aria-label="Selection action" className="flex size-[34px] shrink-0 items-center justify-center"><I /></button>
          ))}
          <VSep />
          {[RotL, RotR, FlipH, FlipV].map((I, i) => (
            <button key={i} aria-label="Transform action" disabled className="flex size-[34px] shrink-0 items-center justify-center"><I /></button>
          ))}
          <VSep />
          {[LowerBottom, LowerOne, RaiseOne].map((I, i) => (
            <button key={i} aria-label="Order action" disabled className="flex size-[34px] shrink-0 items-center justify-center"><I /></button>
          ))}
          <div className={`ml-[277px] flex h-[30px] w-[77px] shrink-0 ${field}`}>
            <input aria-label="Width" disabled className="min-w-0 flex-1 bg-transparent" />
            <Steps className="w-[14px] border-l border-[#dddedc] text-[#7c807e]" />
          </div>
          <button aria-label="Lock ratio" className="ml-2.5 shrink-0"><OpenLock s={16} /></button>
          <label htmlFor="height" className="ml-4 w-[17px] shrink-0 text-[12px] text-[#9a9e9c]">H:</label>
          <div className={`flex h-[30px] w-[77px] shrink-0 ${field}`}>
            <input id="height" readOnly disabled value="0,000" className="min-w-0 flex-1 bg-transparent pl-[9px] text-[12px] text-[#9a9e9c]" />
            <Steps className="w-[14px] border-l border-[#dddedc] text-[#7c807e]" />
          </div>
          <div className="relative ml-[3px] flex h-6 w-[43px] shrink-0 items-center">
            <select aria-label="Units" className="h-6 w-full appearance-none rounded-[3px] border border-[#a9aba8] bg-gradient-to-b from-[#efefee] to-[#d6d7d5] pl-1 text-[12px] outline-none">
              <option>mm</option>
            </select>
            <Tri dir="down" w={5} className="pointer-events-none absolute right-1 text-[#2e3436]" />
          </div>
          <VSep />
          <div className="ml-0.5 flex gap-0.5">
            {[0, 1, 2, 3].map((k) => <ToolButton key={k} label="Scaling option" on><ScaleStroke kind={k} /></ToolButton>)}
          </div>
        </div>

        <main className="flex min-h-0 flex-1">
          <aside className="flex w-[39px] shrink-0 flex-col items-center overflow-hidden pt-1 pr-0.5">
            {TOOLS.map(([n, I], i) => (
              <button key={n} aria-label={n} className={`my-px flex size-7 shrink-0 items-center justify-center rounded-[3px] border ${i === 0 ? "border-[#b2b3b0] bg-[#d8d9d6]" : "border-transparent"}`}><I /></button>
            ))}
            <button aria-label="More tools" className="mt-[26px]"><Tri w={6} className="text-[#2e3436]" /></button>
          </aside>

          <div className="grid min-w-0 flex-1 grid-cols-[18px_minmax(0,1fr)_26px] grid-rows-[18px_minmax(0,1fr)_17px]">
            <svg width="18" height="18" aria-hidden="true"><path d="M5 6h7v2l-3 5-4-3z" fill="#d8962c" /><path d="M5 6.500h7v3l-3 3.500-2-3z" fill="none" stroke="#5e4206" /></svg>
            <HRuler />
            <svg width="26" height="18" aria-hidden="true"><rect x="6" y="5" width="11" height="12" fill="#fff" fillOpacity=".7" /><path d="M9 6h5v9h-2v-4H9z" fill="none" stroke="#8a8e8c" strokeDasharray="2 1" /></svg>

            <VRuler />
            <div className="relative overflow-hidden bg-white">
              <div className="absolute top-[67px] left-[454px] h-[394px] w-[279px] border border-[#555] bg-white shadow-[2px_2px_0_#666]" />
            </div>
            <div className="flex pt-1 pl-1">
              <div className={`relative w-[13px] border-x ${Track}`}>
                <div className="absolute top-[163px] right-[2px] left-[2px] h-[210px] rounded-full bg-[#7a7e7d]" />
              </div>
            </div>

            <div />
            <div className={`mt-0.5 flex h-[13px] items-center border-t px-[3px] ${Track}`}><div className="h-1.5 flex-1 rounded-full bg-[#7a7e7d]" /></div>
            <svg width="26" height="17" aria-hidden="true"><g mask="url(#dither)"><rect x="8" y="6" width="6" height="6" rx="1" fill="#3f7a55" /></g></svg>
          </div>

          <div className="flex w-[401px] shrink-0 flex-col overflow-hidden border-l border-[#b2b3b0]">
            <FillAndStroke />
            <Layers />
          </div>
          <div className={`w-[13px] shrink-0 border-x px-[2px] pt-[3px] ${Track}`}>
            <div className="mx-auto h-[467px] w-[7px] rounded-full bg-[#7a7e7d]" />
          </div>

          <aside className="flex w-[43px] shrink-0 flex-col items-center overflow-hidden pt-1 pl-0.5">
            <ToolButton label="New"><NewDoc /></ToolButton>
            <ToolButton label="Open"><OpenDoc /></ToolButton>
            <ToolButton label="Save"><SaveDoc /></ToolButton>
            <ToolButton label="Print"><PrintDoc /></ToolButton>
            <HSep />
            <ToolButton label="Import"><ImportDoc /></ToolButton>
            <ToolButton label="Export"><ExportDoc /></ToolButton>
            <HSep />
            <ToolButton label="Undo"><UndoIcon /></ToolButton>
            <ToolButton label="Redo"><RedoIcon /></ToolButton>
            <HSep />
            <ToolButton label="Copy"><CopyIcon /></ToolButton>
            <ToolButton label="Cut"><CutIcon /></ToolButton>
            <ToolButton label="Paste"><PasteIcon /></ToolButton>
            <HSep />
            <ToolButton label="Zoom selection"><ZoomSel /></ToolButton>
            <ToolButton label="Zoom drawing"><ZoomDraw /></ToolButton>
            <ToolButton label="Zoom page"><ZoomPage /></ToolButton>
            <HSep />
            <button aria-label="More commands"><Tri w={6} className="text-[#2e3436]" /></button>
          </aside>

          <aside className="flex w-10 shrink-0 flex-col items-center overflow-hidden pt-1 pl-0.5">
            <ToolButton label="Enable snapping" on><SnapNodes /></ToolButton>
            <HSep />
            <ToolButton label="Snap bounding boxes"><SnapNodes /></ToolButton>
            <ToolButton label="Snap edges"><SnapBox /></ToolButton>
            <ToolButton label="Snap corners"><SnapBox x={19} y={19} /></ToolButton>
            <ToolButton label="Snap edge midpoints"><SnapBox x={18} y={9} /></ToolButton>
            <ToolButton label="Snap centers"><SnapBox x={8} y={9} /></ToolButton>
            <HSep />
            <ToolButton label="Snap nodes" on><SnapNodes /></ToolButton>
            <ToolButton label="Snap paths"><SnapPath /></ToolButton>
            <ToolButton label="Snap intersections"><SnapCross /></ToolButton>
            <ToolButton label="Snap cusp nodes" on><SnapCusp /></ToolButton>
            <ToolButton label="Snap smooth nodes"><SnapSmooth /></ToolButton>
            <ToolButton label="Snap midpoints"><SnapMid /></ToolButton>
            <HSep />
            <ToolButton label="Snap others" on><SnapNodes /></ToolButton>
            <ToolButton label="Snap object centers"><SnapCorner /></ToolButton>
            <button aria-label="More snapping" className="mt-6"><Tri w={6} className="text-[#2e3436]" /></button>
          </aside>
        </main>

        <div className="flex h-[33px] shrink-0">
          <div className="min-w-0 flex-1">
            <div className="flex h-5 overflow-hidden py-0.5 pl-px">
              <button aria-label="No color" className="shrink-0 bg-white">
                <Svg s={16}><path d="M0 0l16 16M16 0L0 16" stroke="#7a1616" strokeWidth="1.500" /></Svg>
              </button>
              {SWATCHES.map((c, i) => <button key={i} aria-label="Swatch" className={`h-4 w-4 shrink-0 ${c}`} />)}
            </div>
            <div className={`flex h-[13px] items-center border-t px-[3px] ${Track}`}><div className="h-1.5 w-[258px] rounded-full bg-[#7a7e7d]" /></div>
          </div>
          <button aria-label="Palette menu" className="flex h-4 w-[11px] items-center pt-1 pl-[3px]"><Tri dir="left" w={5} className="text-[#2e3436]" /></button>
        </div>

        <footer className="flex h-[31px] shrink-0 items-center overflow-hidden">
          <dl className="grid w-[127px] shrink-0 grid-cols-[70px_1fr] pl-0.5 text-[11px]">
            <dt>Fill:</dt><dd>N/A</dd><dt>Stroke:</dt><dd>N/A</dd>
          </dl>
          <label htmlFor="obj-opacity" className="w-[14px] shrink-0 text-[12px] text-[#6a6f6d]">O:</label>
          <div className={`mt-1 flex h-[29px] w-[46px] shrink-0 ${field}`}>
            <input id="obj-opacity" readOnly disabled value="0" className="min-w-0 flex-1 bg-transparent pl-[9px] text-[12px] text-[#9a9e9c]" />
            <Steps className="w-[14px] border-l border-[#dddedc] text-[#7c807e]" />
          </div>
          <div className="ml-[3px] h-7 w-px shrink-0 bg-[#cfd0cd]" />
          <button aria-label="Layer visibility" className="ml-[7px] shrink-0"><EyeIcon s={16} /></button>
          <button aria-label="Layer lock" className="ml-3 shrink-0"><OpenLock s={16} /></button>
          <div className="relative mt-1 ml-[7px] flex h-[29px] w-[87px] shrink-0 items-center">
            <select aria-label="Current layer" className="h-full w-full appearance-none rounded-[3px] border border-[#a9aba8] bg-gradient-to-b from-[#efefee] to-[#d6d7d5] pl-[9px] text-[11px] font-bold outline-none">
              <option>•Layer 1</option>
            </select>
            <Tri dir="down" w={5} className="pointer-events-none absolute right-[9px] text-[#2e3436]" />
          </div>
          <p className="min-w-0 flex-1 truncate pt-1 pl-1 leading-5">No objects selected. Click, Shift+click, Alt+scroll mouse on top of objects, or drag around objects to select.</p>
          <div className="h-7 w-px shrink-0 bg-[#cfd0cd]" />
          <dl className="grid w-[58px] shrink-0 grid-cols-[15px_1fr] pl-[3px] text-right text-[11px]">
            <dt className="text-left">X:</dt><dd className="font-['DejaVu_Sans_Mono','Noto_Sans',monospace] text-[10px]">-61,99</dd>
            <dt className="text-left">Y:</dt><dd className="font-['DejaVu_Sans_Mono','Noto_Sans',monospace] text-[10px]">343,20</dd>
          </dl>
          <label htmlFor="zoom" className="ml-[7px] w-3 shrink-0 text-[12px]">Z:</label>
          <div className="mt-1 flex h-[29px] w-[54px] shrink-0 rounded-[3px] border border-[#b2b3b0] bg-white">
            <input id="zoom" defaultValue="35%" className="min-w-0 flex-1 bg-transparent pr-1 text-right text-[12px] outline-none" />
            <Steps className="w-[14px] border-l border-[#dddedc] text-[#2e3436]" />
          </div>
        </footer>
      </div>
    </div>
  );
}
